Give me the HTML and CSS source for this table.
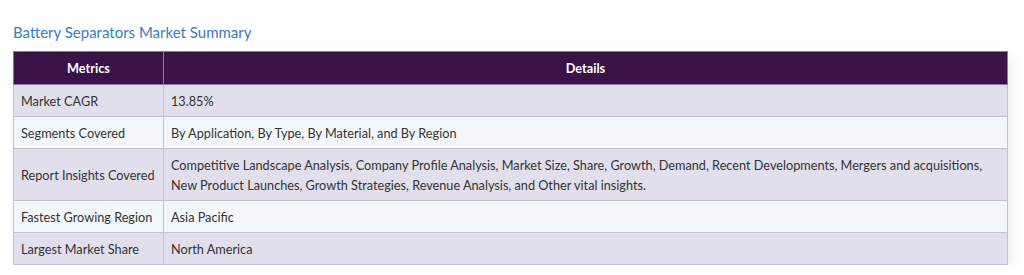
FILE: index.html
```html
<!DOCTYPE html>
<html lang="en">
<head>
<meta charset="utf-8">
<title>Battery Separators Market Summary</title>
<link rel="stylesheet" href="styles.css">
</head>
<body>
<div class="page">
  <h2 class="title">Battery Separators Market Summary</h2>
  <table class="summary">
    <thead>
      <tr><th class="col-metric">Metrics</th><th>Details</th></tr>
    </thead>
    <tbody>
      <tr class="odd"><td class="metric">Market CAGR</td><td>13.85%</td></tr>
      <tr class="even"><td class="metric">Segments Covered</td><td>By Application, By Type, By Material, and By Region</td></tr>
      <tr class="odd"><td class="metric">Report Insights Covered</td><td>Competitive Landscape Analysis, Company Profile Analysis, Market Size, Share, Growth, Demand, Recent Developments, Mergers and acquisitions, New Product Launches, Growth Strategies, Revenue Analysis, and Other vital insights.</td></tr>
      <tr class="even"><td class="metric">Fastest Growing Region</td><td>Asia Pacific</td></tr>
      <tr class="odd"><td class="metric">Largest Market Share</td><td>North America</td></tr>
    </tbody>
  </table>
</div>
</body>
</html>
```

FILE: styles.css
```css
html, body {
  margin: 0;
  padding: 0;
  background: #ffffff;
}
.page {
  padding: 22px 0 0 13px;
  font-family: Lato, "Open Sans", "Liberation Sans", sans-serif;
}
.title {
  margin: 0 0 9px 0;
  font-size: 15px;
  line-height: 20px;
  font-weight: 400;
  color: #3a7dbf;
}
.summary {
  width: 995px;
  table-layout: fixed;
  border-collapse: collapse;
  font-size: 12.7px;
  color: #333333;
  box-shadow: 3px 4px 12px rgba(0, 0, 0, 0.07);
}
.summary th {
  background: #3a1249;
  color: #ffffff;
  font-weight: 700;
  text-align: center;
  padding: 7px 7px;
  line-height: 18px;
  border: 1px solid #8a7a98;
}
.summary .col-metric {
  width: 135px;
}
.summary td {
  padding: 6px 7px 5px 7px;
  line-height: 20px;
  border: 1px solid #c4c0cf;
  vertical-align: middle;
}
.summary td.metric {
  white-space: nowrap;
}
.summary tr.odd td {
  background: #e1dfeb;
}
.summary tr.even td {
  background: #f3f7fb;
}
```
